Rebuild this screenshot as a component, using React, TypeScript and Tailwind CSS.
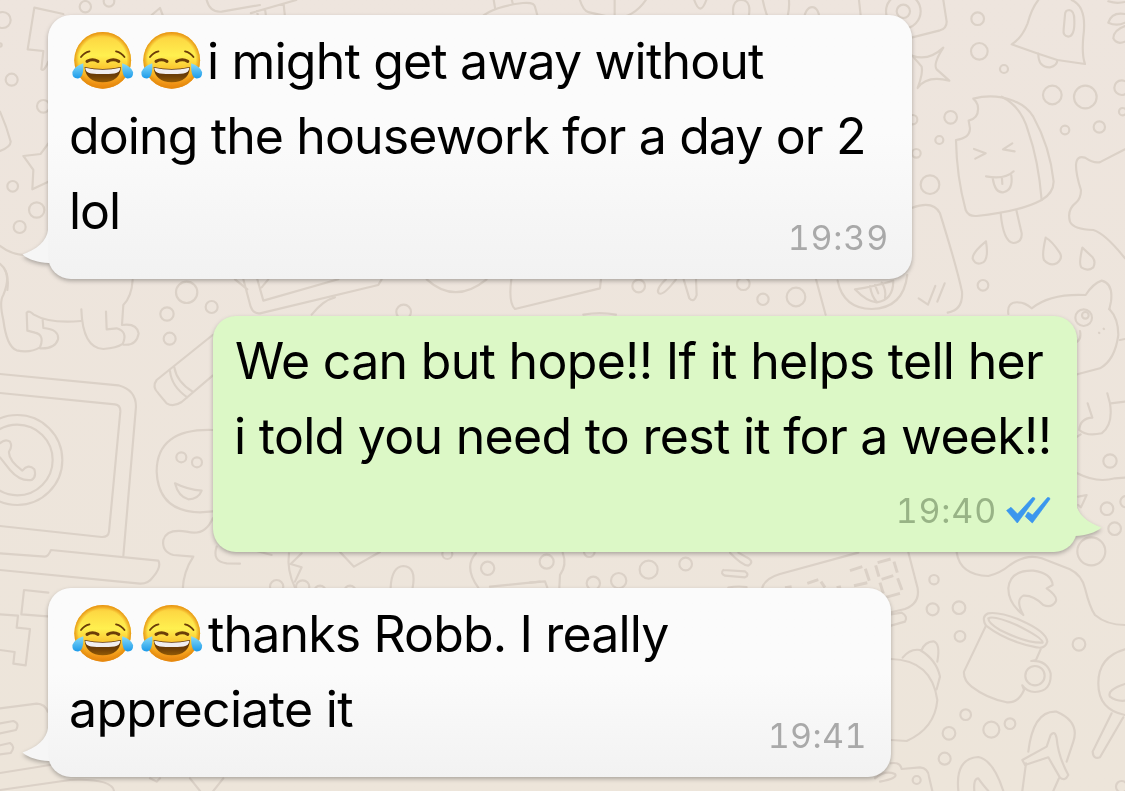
interface TypeLine{
    text:string,
    emojis?:number,
    className:string
}
interface TypeBubble{
    lines:TypeLine[],
    time:string,
    mine?:boolean,
    className:string,
    timeClass:string
}
interface TypeTile{
    transform:string,
    strokeWidth:number,
    paths:string[],
    circles:number[][]
}

const bubbles:TypeBubble[] = [
    {
        lines:[
            {text:"i might get away without", emojis:2, className:"tracking-[-0.82px] -ml-px"},
            {text:"doing the housework for a day or 2", className:"tracking-[-0.88px] -ml-px"},
            {text:"lol", className:"tracking-[-1px] -ml-px"},
        ],
        time:"19:39",
        className:"w-[864px] h-[264px] pt-[9px]",
        timeClass:"right-[23px] bottom-[21px] tracking-[0.8px]",
    },
    {
        lines:[
            {text:"We can but hope!! If it helps tell her", className:"tracking-[-0.7px]"},
            {text:"i told you need to rest it for a week!!", className:"tracking-[-0.71px] -ml-px"},
        ],
        time:"19:40",
        mine:true,
        className:"w-[864px] h-[236px] pt-[8px] ml-[165px] mt-[37px]",
        timeClass:"right-[26px] bottom-[21px] tracking-[0.8px]",
    },
    {
        lines:[
            {text:"thanks Robb. I really", emojis:2, className:"tracking-[-0.85px]"},
            {text:"appreciate it", className:"tracking-[-0.68px] -ml-px"},
        ],
        time:"19:41",
        className:"w-[843px] h-[189px] pt-[9px] mt-[36px]",
        timeClass:"right-[24px] bottom-[21px] tracking-[0.4px]",
    },
];

// every tile has its own drawing scale, circles are [cx, cy, r]
const tiles:TypeTile[] = [
    {
        // top left: flag, star, rounded card
        transform:"scale(.3333)",
        strokeWidth:6.5,
        paths:[
            "M103 23 L190 42 M103 23 L83 148 L130 153 L124 208 Q132 216 145 185",
            "M0 335 Q20 380 32 425 Q32 440 0 453",
            "M145 430 L122 462 L70 468 L100 510 L97 568 L145 545",
            "M0 738 Q35 765 75 765 M0 792 Q30 815 22 870",
            "M620 0 Q630 38 665 35 L780 15",
            "M455 45 L480 24 L488 45",
        ],
        circles:[[8,60,24],[0,135,5],[256,20,17],[327,4,16],[35,239,18],[130,319,19],[38,559,16],[110,630,23],[59,681,18]],
    },
    {
        transform:"scale(.5038) translate(258 0)",
        strokeWidth:4.3,
        paths:[
            "M305 8 L309 46 M268 18 L272 46 M252 22 L257 46 M218 34 L222 46 M240 26 L330 0",
            "M688 46 Q705 15 780 6 Q803 4 804 14 L813 46 M722 0 L725 18 M758 0 L760 8",
            "M893 0 Q900 22 910 24 L962 36 Q1000 35 1024 0 M962 0 L962 36",
            "M1120 0 Q1132 34 1144 0",
            "M1200 46 Q1190 0 1213 0 Q1238 0 1225 46",
            "M1256 0 Q1262 30 1272 46 M1308 0 Q1310 25 1300 46",
            "M1336 46 Q1340 14 1354 14 Q1368 14 1370 46",
            "M1447 0 L1452 46",
        ],
        circles:[],
    },
    {
        // top right: bell, ice lolly, drops and a star
        transform:"translate(880 0) scale(.3333)",
        strokeWidth:6.5,
        paths:[
            "M190 0 L200 65 Q200 85 180 91 L97 112",
            "M97 167 Q145 185 190 143 Q158 192 170 208 L208 242 Q140 225 113 264 Q130 218 125 200 L97 167",
            "M475 0 Q455 25 443 70 Q425 115 395 133 L475 161 L532 180 L615 192 Q605 165 610 110 Q622 20 575 0",
            "M475 161 Q475 203 510 202 Q532 197 532 180",
            "M555 45 Q555 30 568 30 Q583 32 583 60 Q585 108 565 110 Q548 108 551 88 Z",
            "M685 4 Q710 12 735 6 M735 42 Q695 35 685 68 Q710 80 735 68 M735 78 Q700 90 700 115 Q710 135 735 125",
            "M280 296 Q340 280 400 302 Q440 318 460 350 Q510 440 521 545 Q520 580 485 600 Q420 635 290 648 Q265 650 257 630 Q230 530 228 420 Q270 415 270 385 L266 362 Q300 355 293 315 Q290 305 280 296",
            "M365 290 Q425 320 445 395 Q475 480 485 600",
            "M282 447 L317 460 L286 476 M397 430 L369 448 L404 454",
            "M318 529 Q375 540 401 514 M338 534 Q345 580 370 577 Q400 570 394 526 M366 536 L367 552",
            "M362 640 Q370 725 400 729 Q427 727 425 700 L409 630",
            "M318 724 Q277 757 278 776 Q285 794 303 790 Q328 785 318 724",
            "M497 713 Q485 765 492 780 Q510 800 530 790 Q550 775 539 758 Q515 722 497 713",
            "M607 743 Q595 795 605 803 Q624 815 640 802 Q648 785 638 772 Z",
            "M97 623 Q160 600 180 640 Q230 800 246 875 Q250 930 203 938",
            "M116 895 L144 914 L166 858 M194 850 L172 905",
            "M735 448 L663 485 Q645 493 615 473 Q590 465 588 495 Q588 525 603 570 Q603 595 588 608 Q560 630 570 665 Q580 688 640 690 Q675 700 735 775",
            "M385 942 Q380 905 415 907 Q435 907 455 925 Q510 880 617 885 Q640 850 665 842 Q700 850 693 905 L688 928",
        ],
        circles:[[70,34,52],[70,34,20],[293,56,19],[298,154,25],[372,207,12],[517,285,28],[616,291,34],[725,263,22],[728,335,11],[555,390,13],[658,381,17],[98,359,14],[212,352,19],[178,420,12],[109,460,13],[150,554,28],[309,856,16]],
    },
    {
        // left: bear legs, laptop, marker and gingerbread man
        transform:"translate(0 270) scale(.3333)",
        strokeWidth:6.5,
        paths:[
            "M15 0 Q30 25 10 75 Q-3 95 10 150 Q20 230 50 241 Q90 250 120 232 Q135 195 105 188 L82 182 L80 128 Q88 120 100 133 Q150 162 243 153 M128 150 L130 174 Q178 178 174 208 Q165 237 120 235",
            "M244 118 Q248 235 310 237 Q350 235 368 222 Q385 185 350 175 L320 178 L318 125 M398 30 Q395 80 370 105 L366 165 Q410 158 416 190 Q410 228 370 224",
            "M0 312 L355 346 Q408 360 408 410 L370 858 M0 369 L345 403 Q362 405 361 425 L327 785 Q325 802 305 801 L0 768",
            "M0 850 L135 860 Q145 860 153 840 L475 872 Q485 890 460 920 Q445 942 420 941 L0 900",
            "M0 520 Q15 505 30 515 Q38 530 27 545 Q25 570 67 602 Q85 580 103 598 Q110 620 95 630 Q60 635 30 600 L0 562",
            "M638 195 L470 330 Q455 350 475 370 L500 400 Q520 412 545 396 L638 317 M510 303 Q515 350 562 382 M523 292 Q530 335 578 365",
            "M638 480 Q470 475 470 605 Q475 725 600 727 L638 724",
            "M525 640 Q565 660 605 662 Q595 688 565 688 Q535 680 525 640",
            "M638 745 Q615 800 560 785 Q500 775 490 810 Q485 845 520 855 L580 860 Q550 905 548 960",
            "M650 830 Q635 875 680 880 L720 881",
        ],
        circles:[[52,570,135],[52,570,106],[560,67,32],[501,132,20],[635,111,18],[509,206,18],[544,562,15],[591,577,15]],
    },
    {
        transform:"translate(200 260) scale(.3333)",
        strokeWidth:6.5,
        paths:[
            "M105 58 L142 88 M130 58 L152 140 Q160 162 180 160 L535 75 L545 58 M172 58 L190 122 L415 58 M205 58 L185 82",
            "M335 164 Q370 120 405 112 M680 58 Q765 135 860 58",
            "M934 58 Q925 130 945 147 L1200 85 L1203 58",
        ],
        circles:[[611,156,22]],
    },
    {
        transform:"translate(560 260) scale(.3333)",
        strokeWidth:6.5,
        paths:[
            "M318 58 Q285 90 297 100 Q310 108 348 58 M371 58 L388 115 Q402 130 410 105 L408 58",
            "M768 58 L797 164 M70 164 Q120 155 168 164",
            "M833 62 Q850 145 935 147 Q1030 145 1042 45",
            "M885 88 Q940 80 1000 62 Q1000 120 950 127 Q920 125 885 88 M930 78 Q935 110 950 125 M945 75 L955 100 M965 68 Q980 90 975 115",
        ],
        circles:[[236,78,19],[550,71,19],[609,118,17],[708,111,28]],
    },
    {
        transform:"translate(140 540) scale(.3333)",
        strokeWidth:6.5,
        paths:[
            "M447 40 Q440 90 465 143 M485 40 L452 72 L485 82 L465 125",
            "M350 33 L395 45 M600 36 L642 80 L720 36",
            "M752 143 Q755 80 790 78 Q830 80 818 143 M1008 40 Q970 80 1015 143 M1050 140 L1200 125",
        ],
        circles:[[410,140,20],[488,141,20],[540,155,18],[630,155,18],[922,42,15],[1043,85,20]],
    },
    {
        transform:"translate(530 540) scale(.3333)",
        strokeWidth:6.5,
        paths:[
            "M0 128 L45 124 L52 143 M98 38 Q112 75 90 105 L88 143",
            "M600 38 Q635 75 655 77 Q675 65 650 52 L625 38",
            "M580 90 L645 94 Q660 105 645 112 L585 107 Q570 100 580 90 M595 143 Q620 137 650 141",
            "M697 143 Q705 115 750 102 L985 38",
        ],
        circles:[[50,65,21],[178,35,16],[190,130,20],[266,122,23],[356,89,27],[467,72,19]],
    },
    {
        // bottom right: mug, swirl, flip flops and spoon
        transform:"translate(860 480) scale(.3333)",
        strokeWidth:6.5,
        paths:[
            "M145 217 L173 325 Q180 370 135 387 L93 397 M93 403 L125 398 Q145 410 135 425 L93 437",
            "M290 217 Q300 285 385 288 Q420 280 450 255 Q500 220 545 235 L630 268 Q665 285 675 325 Q690 385 705 405 Q740 435 795 435",
            "M490 405 Q445 370 445 325 Q450 270 520 272 Q575 280 578 315 L560 325 Q595 350 587 365 Q575 385 550 375 Q520 345 490 347 Q465 360 490 405",
            "M378 437 Q362 410 385 400 Q420 395 480 420 Q560 455 562 485 Q555 508 530 502 Q440 485 378 437 M385 415 Q400 405 470 435 Q550 475 548 488 Q500 490 420 450 Q385 430 385 415",
            "M378 437 L312 575 Q310 600 335 620 Q380 655 440 667 Q475 670 492 630 L487 616 M542 508 L528 540 L514 543 Q560 540 572 580 Q575 635 525 636 Q500 635 487 616",
            "M93 537 Q215 540 232 660 Q225 745 140 783 L93 780 M128 533 Q150 505 180 510 Q230 540 240 590 L230 628 M185 510 Q195 485 220 484 Q242 490 232 545",
            "M93 850 Q120 845 125 867 L180 862 Q205 865 207 890 L217 933 M45 895 Q75 870 105 882 Q115 895 60 905",
            "M295 933 Q285 835 355 831 Q400 840 430 933 M343 933 Q340 895 355 895 Q365 910 385 933",
            "M487 933 L498 850 M505 815 Q520 690 590 695 Q660 725 640 785 L620 845 M580 933 L597 895",
            "M487 840 L560 800 L572 765 Q585 750 590 775 Q595 830 625 885 Q615 905 600 893 L565 832 L495 855 Z",
            "M795 508 Q715 530 715 610 Q715 690 795 705 M795 612 Q740 630 750 650 Q770 665 795 662",
            "M755 700 L698 815 Q700 840 720 832 L790 712",
            "M655 50 L680 45 L663 82 L655 75",
        ],
        circles:[[222,299,14],[218,388,18],[297,383,19],[300,469,16],[657,493,19],[525,587,29],[317,704,16],[267,760,19],[394,749,24],[450,731,16],[254,836,18],[170,900,12],[694,214,42],[764,146,19],[741,86,19],[798,65,17],[785,920,17]],
    },
    {
        transform:"translate(0 570) scale(.3333)",
        strokeWidth:6.5,
        paths:[
            "M72 60 L145 68 M72 60 L64 133 L143 139 M0 133 L54 137 L50 173 L90 177 L77 286 L40 281 L44 246 L0 240",
            "M0 415 L110 401 Q135 402 143 425 M0 460 L40 453 Q60 460 48 480 L0 490 M0 526 L30 519 Q48 530 32 549 L0 553",
            "M0 609 L150 585 M0 660 L210 630 Q335 625 342 663 M450 625 L470 635 L480 625 M570 625 L600 663 M670 625 L640 663",
        ],
        circles:[],
    },
    {
        transform:"translate(0 765) scale(.7175)",
        strokeWidth:3,
        paths:[
            "M478 38 L477 78 M515 38 Q515 60 525 78 M525 38 Q575 75 605 50 L612 38 M668 38 Q690 90 710 38",
            "M772 38 L775 78 M782 38 L780 78 M922 38 L930 78 M940 38 L952 56 L965 38 M975 78 L1035 52 L1040 65 L1005 78 M1060 78 Q1070 40 1100 68 L1102 78",
            "M1142 38 Q1155 78 1166 38",
        ],
        circles:[[375,77,12]],
    },
    {
        // right edge: cat face and paws
        transform:"translate(1000 260) scale(.3333)",
        strokeWidth:6.5,
        paths:[
            "M328 147 Q355 175 355 225 Q345 300 300 325 L232 343 M360 240 L375 237 M232 245 Q245 235 240 213",
            "M263 430 L277 473 Q240 475 238 510 Q260 530 305 520 Q340 495 330 430 L322 400 M332 430 L375 425 M232 530 L242 523",
            "M232 640 Q290 670 345 655 L375 653 M297 218 L298 219 M311 206 L312 207",
        ],
        circles:[[251,173,25],[256,166,10],[330,603,20]],
    },
];

function Doodles(){
    return(
        <svg
            className="absolute inset-0"
            width={1125}
            height={791}
            fill="none"
            stroke="#dbd1c7"
            strokeLinejoin="round"
            strokeLinecap="round"
        >
            {tiles.map((tile,i)=>(
                <g key={i} transform={tile.transform} strokeWidth={tile.strokeWidth}>
                    {tile.paths.map((d)=><path key={d} d={d}/>)}
                    {tile.circles.map(([cx,cy,r])=>(
                        <circle key={cx+"-"+cy+"-"+r} cx={cx} cy={cy} r={r}/>
                    ))}
                </g>
            ))}
            {/* digits on the alarm clock */}
            <g transform="translate(530 540) scale(.3333)" strokeWidth={9} strokeLinecap="butt">
                <path d="M960 92 L997 80 M1006 86 L1018 122 M972 137 L1012 128 M1043 68 L1082 57 M1037 76 L1047 110 M1092 65 L1102 98 M1055 118 L1090 107 M1050 128 L1060 160 M1103 115 L1116 150 M1067 172 L1110 160 M832 130 L865 119 M873 125 L885 143 M765 143 L785 140 M920 143 L933 140"/>
            </g>
        </svg>
    );
}

function Joy(){
    return(
        <svg className="h-[60px] w-[69px] shrink-0 -mt-[3px]" viewBox="0 0 69 60">
            <defs>
                <linearGradient id="face" x1="0" y1="0" x2="0" y2="1">
                    <stop offset="0" stopColor="#f9b92c"/>
                    <stop offset=".12" stopColor="#fdd843"/>
                    <stop offset=".42" stopColor="#fff04f"/>
                    <stop offset=".7" stopColor="#fabb28"/>
                    <stop offset="1" stopColor="#ec830f"/>
                </linearGradient>
                <radialGradient id="rim">
                    <stop offset=".84" stopColor="#e38a0c" stopOpacity="0"/>
                    <stop offset="1" stopColor="#e38a0c" stopOpacity=".85"/>
                </radialGradient>
                <linearGradient id="mouth" x1="0" y1="0" x2="0" y2="1">
                    <stop offset="0" stopColor="#552c08"/>
                    <stop offset=".6" stopColor="#6f3f06"/>
                    <stop offset="1" stopColor="#935b05"/>
                </linearGradient>
                <linearGradient id="tear" x1="0" y1="0" x2="0" y2="1">
                    <stop offset="0" stopColor="#8adcf8"/>
                    <stop offset="1" stopColor="#1b9aea"/>
                </linearGradient>
            </defs>
            <circle cx="32.7" cy="30.3" r="28.4" fill="url(#face)"/>
            <circle cx="32.7" cy="30.3" r="28.4" fill="url(#rim)"/>
            <g fill="none" stroke="#6b3d08" strokeLinecap="round">
                <path d="M11 27 Q14 22.5 19.5 21.3 M46 21.3 Q51.5 22.5 54.5 27" strokeWidth="1.8"/>
                <path d="M17 31.4 Q22.5 28 28 31.4 M37.6 31.4 Q43.3 28 48.8 31.4" strokeWidth="3"/>
            </g>
            <path d="M14.6 37 Q32.7 41 50.9 37 Q50 52 32.7 52.3 Q16 52 14.6 37 Z" fill="url(#mouth)"/>
            <path d="M15.2 37.8 Q32.7 41.6 50.3 37.8 Q50 43 44.5 43.4 Q32.7 44.6 21 43.4 Q15.5 43 15.2 37.8 Z" fill="#f1eef0"/>
            <path d="M13.3 33.2 Q4 36.5 2.4 42 Q2 48.7 8 48.5 Q14 47.5 13.3 33.2 Z" fill="url(#tear)"/>
            <path d="M52.2 33.2 Q61.5 36.5 63.1 42 Q63.5 48.7 57.5 48.5 Q51.5 47.5 52.2 33.2 Z" fill="url(#tear)"/>
        </svg>
    );
}

function Tail({mine}:{mine?:boolean}){
    return(
        <svg
            className={mine
                ? "absolute -right-[25px] bottom-[12px] -scale-x-100"
                : "absolute -left-[26px] bottom-[12px]"}
            width={30}
            height={42}
            viewBox="0 0 30 42"
        >
            <path
                d="M26 0 L26 5 C25 16 14 25 0.5 29.5 C7 35 16 37.3 27 38 L30 38 L30 0 Z"
                fill={mine ? "#dcf8c6" : "#f6f6f6"}
            />
        </svg>
    );
}

function Bubble({lines,time,mine=false,className,timeClass}:TypeBubble){
    return(
        <div className={`relative shrink-0 drop-shadow-[0_2px_2px_rgba(0,0,0,0.28)] ${className}`}>
            <Tail mine={mine}/>
            <div className={`absolute inset-0 rounded-[23px] ${mine
                ? "bg-[#dcf8c6]"
                : "bg-linear-to-b from-[#fbfbfb] from-45% to-[#f2f2f2]"}`}
            />
            <div className="relative pl-[22px] text-[50px] leading-[75px] text-black">
                {lines.map((line)=>(
                    <p key={line.text} className="flex items-center whitespace-pre">
                        {Array.from({length:line.emojis ?? 0},(_,i)=><Joy key={i}/>)}
                        <span className={line.className}>{line.text}</span>
                    </p>
                ))}
            </div>
            <div className={`absolute flex items-center gap-[9px] text-[34px] leading-[40px] tabular-nums ${timeClass} ${mine ? "text-[#98b386]" : "text-[#a9a9a9]"}`}>
                <span>{time}</span>
                {mine&&
                    <svg
                        className="-mt-px"
                        width={45}
                        height={27}
                        viewBox="0 0 45 27"
                        fill="#3b97ee"
                        stroke="#3b97ee"
                        strokeWidth={0.7}
                        strokeLinejoin="round"
                    >
                        <path d="M0.6 13.5 L5 10.3 L11.5 17 L26.5 0.6 Q29 0.4 29 2 L11.3 26 Z"/>
                        <path d="M22 15 L26.5 18 L41.5 0.6 Q44 0.4 44 2 L26.3 26 L19.3 19.5 Z"/>
                    </svg>
                }
            </div>
        </div>
    );
}

export default function App(){
    return(
        <div className="
            relative h-[791px] w-[1125px] overflow-hidden
            bg-linear-to-b from-[#eee5de] to-[#ede5da]
            font-['Inter','Liberation_Sans',sans-serif]
        ">
            <Doodles/>
            <main className="relative flex flex-col items-start pt-[15px] pl-[48px]">
                {bubbles.map((bubble)=><Bubble key={bubble.time} {...bubble}/>)}
            </main>
        </div>
    );
}
